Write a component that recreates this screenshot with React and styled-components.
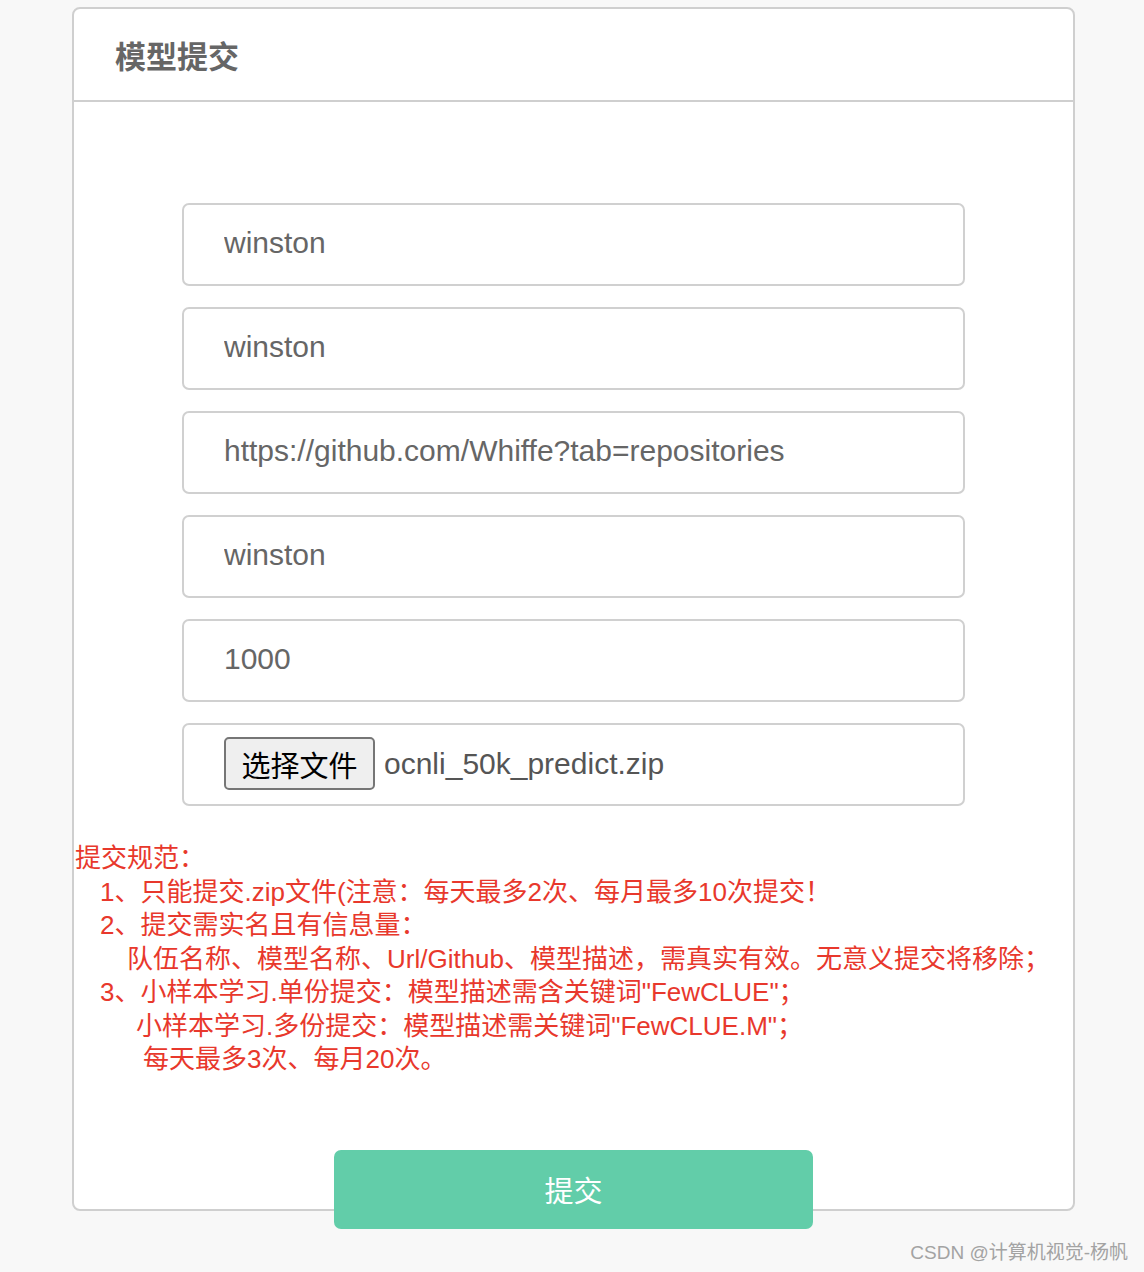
import styled, { createGlobalStyle } from 'styled-components'

const GlobalStyle = createGlobalStyle`
  html, body {
    margin: 0;
    padding: 0;
    background: #f8f8f8;
  }
  body {
    font-family: "Liberation Sans", "Noto Sans CJK SC", sans-serif;
  }
`

const fields = [
  'winston',
  'winston',
  'https://github.com/Whiffe?tab=repositories',
  'winston',
  '1000',
]

const rules = [
  { indent: 0, text: '提交规范：' },
  { indent: 25, text: '1、只能提交.zip文件(注意：每天最多2次、每月最多10次提交！' },
  { indent: 25, text: '2、提交需实名且有信息量：' },
  { indent: 52, text: '队伍名称、模型名称、Url/Github、模型描述，需真实有效。无意义提交将移除；' },
  { indent: 25, text: '3、小样本学习.单份提交：模型描述需含关键词"FewCLUE"；' },
  { indent: 61, text: '小样本学习.多份提交：模型描述需关键词"FewCLUE.M"；' },
  { indent: 68, text: '每天最多3次、每月20次。' },
]

export default function App() {
  return (
    <Page>
      <GlobalStyle />
      <Card>
        <CardHeader>
          <Title>模型提交</Title>
        </CardHeader>
        <CardBody>
          <Fields>
            {fields.map((value, i) => (
              <TextInput key={i} type='text' defaultValue={value} readOnly />
            ))}
            <FileField>
              <FileButton type='button'>选择文件</FileButton>
              <FileName>ocnli_50k_predict.zip</FileName>
            </FileField>
          </Fields>
          <Rules>
            {rules.map((rule, i) => (
              <RuleLine key={i} $indent={rule.indent}>
                {rule.text}
              </RuleLine>
            ))}
          </Rules>
          <SubmitButton type='button'>提交</SubmitButton>
        </CardBody>
      </Card>
      <Watermark>CSDN @计算机视觉-杨帆</Watermark>
    </Page>
  )
}

const Page = styled.div`
  width: 1144px;
  min-height: 1272px;
  padding-top: 7px;
  box-sizing: border-box;
`

const Card = styled.section`
  margin-left: 72px;
  width: 1003px;
  box-sizing: border-box;
  background: #fff;
  border: 2px solid #cfcfcf;
  border-radius: 8px;
`

const CardHeader = styled.header`
  height: 91px;
  display: flex;
  align-items: center;
  padding-left: 41px;
  border-bottom: 2px solid #cfcfcf;
`

const Title = styled.h2`
  margin: 0;
  font-family: "Noto Sans CJK SC", sans-serif;
  font-size: 31px;
  font-weight: 700;
  color: #666;
`

const CardBody = styled.div`
  display: flex;
  flex-direction: column;
  padding-top: 101px;
`

const Fields = styled.div`
  display: flex;
  flex-direction: column;
  gap: 21px;
  width: 783px;
  margin-left: 108px;
`

const TextInput = styled.input`
  height: 83px;
  box-sizing: border-box;
  border: 2px solid #d0d0d0;
  border-radius: 7px;
  padding: 0 0 4px 40px;
  font-family: "Liberation Sans", "Noto Sans CJK SC", sans-serif;
  font-size: 30px;
  color: #666;
  background: #fff;
  outline: none;
`

const FileField = styled.div`
  height: 83px;
  box-sizing: border-box;
  border: 2px solid #d0d0d0;
  border-radius: 7px;
  padding: 0 0 2px 40px;
  display: flex;
  align-items: center;
  gap: 9px;
`

const FileButton = styled.button`
  width: 151px;
  height: 53px;
  padding: 0;
  box-sizing: border-box;
  border: 2px solid #767676;
  border-radius: 5px;
  background: #efefef;
  font-family: "Noto Sans CJK SC", sans-serif;
  font-size: 29px;
  color: #000;
`

const FileName = styled.span`
  font-size: 30px;
  color: #555;
`

const Rules = styled.div`
  margin: 36px 0 0 1px;
  font-family: "Liberation Sans", "Noto Sans CJK SC", sans-serif;
  font-size: 26px;
  line-height: 33.5px;
  color: #e8382c;
`

const RuleLine = styled.div`
  padding-left: ${(p) => p.$indent}px;
  white-space: nowrap;
`

const SubmitButton = styled.button`
  align-self: center;
  width: 479px;
  height: 79px;
  margin: 73px 0 -20px;
  border: none;
  border-radius: 7px;
  background: #62cda9;
  color: #fff;
  font-family: "Noto Sans CJK SC", sans-serif;
  font-size: 29px;
  cursor: pointer;
`

const Watermark = styled.div`
  display: flex;
  justify-content: flex-end;
  margin-top: 31px;
  padding-right: 16px;
  font-family: "Liberation Sans", "Noto Sans CJK SC", sans-serif;
  font-size: 19px;
  line-height: 22px;
  color: #a3a3a3;
`
